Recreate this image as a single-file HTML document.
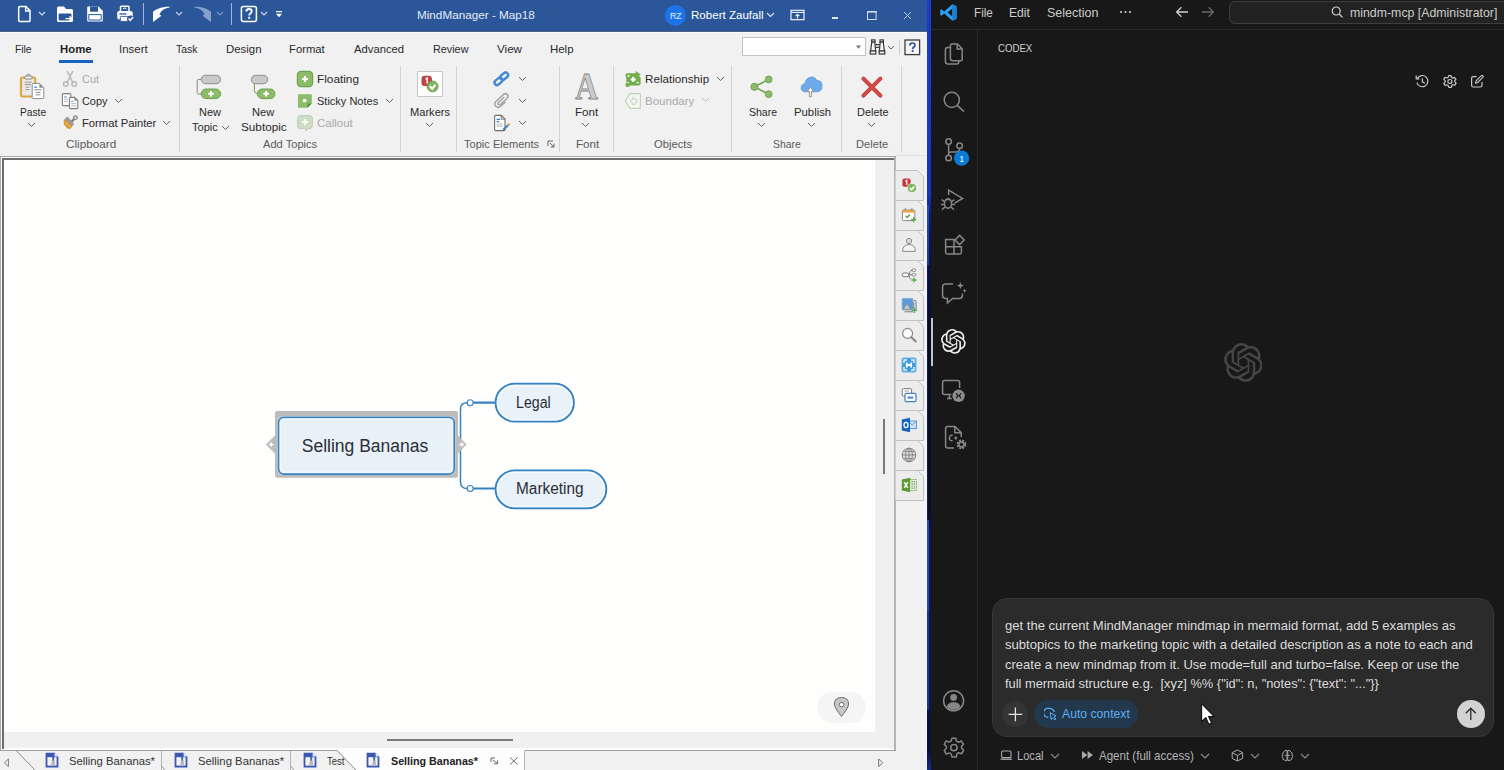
<!DOCTYPE html>
<html><head><meta charset="utf-8"><title>MindManager - VS Code</title>
<style>
html,body{margin:0;padding:0;}
body{width:1504px;height:770px;overflow:hidden;position:relative;background:#181818;font-family:"Liberation Sans",sans-serif;}
body>div,body>span,body>svg{position:absolute;display:block;}
body>span{white-space:pre;transform-origin:0 0;}
</style></head><body>
<div style="left:0px;top:0px;width:927px;height:770px;background:#f1f1f2;"></div>
<div style="left:0px;top:0px;width:927px;height:31px;background:#2b579a;"></div>
<div style="left:0px;top:31px;width:927px;height:1px;background:#4d6186;"></div>
<div style="left:0px;top:32px;width:927px;height:1px;background:#fbfbfb;"></div>
<div style="left:0px;top:156px;width:896px;height:1px;background:#a9a9a9;"></div>
<div style="left:0px;top:157px;width:1px;height:594px;background:#a9a9a9;"></div>
<div style="left:1px;top:157px;width:894px;height:593px;background:#fdfdfd;"></div>
<div style="left:2px;top:158px;width:892px;height:2px;background:#6d6d6d;"></div>
<div style="left:2px;top:158px;width:2px;height:591px;background:#6d6d6d;"></div>
<div style="left:4px;top:160px;width:871px;height:572px;background:#fefefd;"></div>
<div style="left:4px;top:732px;width:890px;height:16px;background:#f0f0f0;"></div>
<div style="left:875px;top:160px;width:19px;height:572px;background:#f0f0f0;"></div>
<div style="left:894px;top:157px;width:2px;height:594px;background:#b4b4b4;"></div>
<div style="left:0px;top:750px;width:896px;height:1px;background:#a0a0a0;"></div>
<div style="left:896px;top:155px;width:29px;height:1px;background:#dedede;"></div>
<div style="left:883px;top:419px;width:2px;height:55px;background:#7a7a7a;"></div>
<div style="left:387px;top:739px;width:126px;height:2px;background:#7a7a7a;"></div>
<div style="left:927px;top:0px;width:4px;height:770px;background:linear-gradient(to bottom,#1a3cc6 0px,#1535c0 195px,#0d1c66 215px,#0a1240 265px,#080c2c 330px,#080c2c 515px,#0c1648 530px,#0c1648 700px,#0a1038 720px,#0a1038 750px,#142c90 770px);"></div>
<div style="left:927px;top:205px;width:2px;height:60px;background:linear-gradient(to bottom,#1c49d0,#1a3aa0);"></div>
<div style="left:927px;top:265px;width:1px;height:255px;background:#101c58;"></div>
<div style="left:927px;top:520px;width:2px;height:90px;background:#1d48c4;"></div>
<div style="left:927px;top:610px;width:2px;height:100px;background:#16389c;"></div>
<div style="left:925px;top:32px;width:2px;height:738px;background:#f3f3f3;"></div>
<div style="left:931px;top:0px;width:573px;height:770px;background:#181818;"></div>
<div style="left:931px;top:29px;width:573px;height:1px;background:#2b2b2b;"></div>
<div style="left:977px;top:30px;width:1px;height:740px;background:#2b2b2b;"></div>
<svg style="left:17px;top:5px;" width="15" height="18" viewBox="0 0 15 18"><path d="M1.7 2.6 Q1.7 1.6 2.7 1.6 H9 L13 5.6 V15.4 Q13 16.4 12 16.4 H2.7 Q1.7 16.4 1.7 15.4 Z" fill="none" stroke="#ffffff" stroke-width="1.5"/><path d="M8.6 1.6 V6 H13" fill="none" stroke="#ffffff" stroke-width="1.3"/></svg>
<svg style="left:38.0px;top:11.1px;" width="8" height="5" viewBox="0 0 8 5"><path d="M1 1 L4.0 4 L7 1" fill="none" stroke="#d5def0" stroke-width="1.1"/></svg>
<svg style="left:56px;top:5px;" width="18" height="18" viewBox="0 0 18 18"><path d="M1 3 Q1 1.5 2.5 1.5 H8 L10 4 H15.5 Q17 4 17 5.5 V15.5 Q17 17 15.5 17 H2.5 Q1 17 1 15.5 Z" fill="#ffffff"/><rect x="2.6" y="8.6" width="12.8" height="6.8" rx="1" fill="#2b579a"/><path d="M9.5 13.6 H15.6 M13.4 11.4 L15.8 13.6 L13.4 15.8" stroke="#ffffff" stroke-width="1.4" fill="none"/></svg>
<svg style="left:86px;top:5px;" width="18" height="18" viewBox="0 0 18 18"><path d="M1.2 2.5 Q1.2 1.5 2.2 1.5 H12.5 L16.8 5.8 V15.5 Q16.8 16.5 15.8 16.5 H2.2 Q1.2 16.5 1.2 15.5 Z" fill="#ffffff"/><rect x="4" y="1.5" width="8" height="5.2" fill="#2b579a"/><rect x="3.4" y="10" width="11.2" height="5" fill="#2b579a" opacity="0"/><path d="M2.8 9.6 H15.2 V15 H2.8 Z" fill="#ffffff" stroke="#2b579a" stroke-width="1"/></svg>
<svg style="left:116px;top:5px;" width="19" height="18" viewBox="0 0 19 18"><path d="M4.5 6 V2 Q4.5 1.2 5.3 1.2 H12.2 Q13 1.2 13 2 V6" fill="none" stroke="#ffffff" stroke-width="1.5"/><rect x="1.2" y="6" width="15.6" height="8.4" rx="2.2" fill="#ffffff"/><rect x="4.3" y="11.4" width="8.4" height="5" rx="0.8" fill="#ffffff" stroke="#2b579a" stroke-width="0.9"/><rect x="3.4" y="8.3" width="7" height="1.3" fill="#2b579a"/><path d="M7 3.8 L9 2.8 L10.6 4.2" fill="none" stroke="#ffffff" stroke-width="1"/><circle cx="14.6" cy="14" r="3.6" fill="#2b579a"/><path d="M12.6 13.6 L14.2 15.4 L17.2 12" fill="none" stroke="#ffffff" stroke-width="1.5"/></svg>
<div style="left:143px;top:3px;width:1px;height:22px;background:#9db4dc;"></div>
<svg style="left:151px;top:5px;" width="20" height="19" viewBox="0 0 20 19"><path d="M18.6 1.7 C11.6 1.4 5.6 3.6 2 6.8 V17 L10.4 10.8 L8.4 9.2 C10.4 5.4 14 3 18.6 2.5 Z" fill="#ffffff"/></svg>
<svg style="left:175.0px;top:10.7px;" width="8" height="5" viewBox="0 0 8 5"><path d="M1 1 L4.0 4 L7 1" fill="none" stroke="#c5d2ea" stroke-width="1.1"/></svg>
<svg style="left:193px;top:5px;" width="20" height="19" viewBox="0 0 20 19"><path d="M1.4 1.7 C8.4 1.4 14.4 3.6 18 6.8 V17 L9.6 10.8 L11.6 9.2 C9.6 5.4 6 3 1.4 2.5 Z" fill="#86a0cc"/></svg>
<svg style="left:216.0px;top:10.7px;" width="8" height="5" viewBox="0 0 8 5"><path d="M1 1 L4.0 4 L7 1" fill="none" stroke="#7f9acb" stroke-width="1.1"/></svg>
<div style="left:231px;top:3px;width:1px;height:22px;background:#9db4dc;"></div>
<svg style="left:240px;top:5px;" width="18" height="18" viewBox="0 0 18 18"><rect x="1.4" y="1.4" width="15" height="15" rx="1.8" fill="none" stroke="#ffffff" stroke-width="1.5"/><path d="M6.3 6.6 Q6.3 4 9 4 Q11.7 4 11.7 6.3 Q11.7 7.8 10.3 8.5 Q9.2 9.1 9.2 10.6" fill="none" stroke="#ffffff" stroke-width="1.9"/><rect x="8.2" y="11.8" width="2" height="2" fill="#ffffff"/></svg>
<svg style="left:260.0px;top:10.7px;" width="8" height="5" viewBox="0 0 8 5"><path d="M1 1 L4.0 4 L7 1" fill="none" stroke="#d5def0" stroke-width="1.1"/></svg>
<svg style="left:275px;top:10px;" width="8" height="9" viewBox="0 0 8 9"><rect x="1" y="1" width="6" height="1.2" fill="#ffffff"/><path d="M1 3.8 H7 L4 7.2 Z" fill="#ffffff"/></svg>
<span style="left:416.60px;top:8.00px;font-size:11.3px;line-height:15px;color:#e4eaf6;transform:scaleX(1.0369);">MindManager - Map18</span>
<svg style="left:664px;top:4px;" width="23" height="23" viewBox="0 0 23 23"><circle cx="11.3" cy="11.4" r="10.5" fill="#1b74e8"/></svg>
<span style="left:670.00px;top:10.00px;font-size:9.5px;line-height:12px;color:#e8f0ff;transform:scaleX(0.9109);">RZ</span>
<span style="left:691.30px;top:8.00px;font-size:11.3px;line-height:15px;color:#ffffff;transform:scaleX(1.0237);">Robert Zaufall</span>
<svg style="left:766.1px;top:11.75px;" width="9" height="5.5" viewBox="0 0 9 5.5"><path d="M1 1 L4.5 4.5 L8 1" fill="none" stroke="#e0e8f6" stroke-width="1.1"/></svg>
<svg style="left:790px;top:9px;" width="15" height="12" viewBox="0 0 15 12"><rect x="1" y="1.3" width="13" height="9.4" fill="none" stroke="#ffffff" stroke-width="1.1"/><path d="M1 3.4 H14" stroke="#ffffff" stroke-width="1"/><path d="M7.5 9.6 V5.6 M5.6 7.2 L7.5 5.4 L9.4 7.2" fill="none" stroke="#ffffff" stroke-width="1.1"/></svg>
<div style="left:832px;top:17px;width:6px;height:2px;background:#dfe7f5;"></div>
<svg style="left:866px;top:10px;" width="12" height="11" viewBox="0 0 12 11"><rect x="1.5" y="1.5" width="8.6" height="8" fill="none" stroke="#d4deef" stroke-width="1"/><rect x="1" y="1" width="9.6" height="1.6" fill="#d4deef"/></svg>
<svg style="left:903px;top:11px;" width="9" height="9" viewBox="0 0 9 9"><path d="M1 1 L8 8 M8 1 L1 8" stroke="#c0cde6" stroke-width="1"/></svg>
<span style="left:14.50px;top:42.00px;font-size:11.3px;line-height:15px;color:#2a2a2a;transform:scaleX(0.9103);">File</span>
<span style="left:60.00px;top:42.00px;font-size:11.3px;line-height:15px;color:#1f1f1f;font-weight:bold;transform:scaleX(1.0048);">Home</span>
<div style="left:59px;top:60px;width:34px;height:3px;background:#1565c0;"></div>
<span style="left:118.90px;top:42.00px;font-size:11.3px;line-height:15px;color:#2a2a2a;transform:scaleX(1.0169);">Insert</span>
<span style="left:175.60px;top:42.00px;font-size:11.3px;line-height:15px;color:#2a2a2a;transform:scaleX(0.9204);">Task</span>
<span style="left:225.60px;top:42.00px;font-size:11.3px;line-height:15px;color:#2a2a2a;transform:scaleX(1.0114);">Design</span>
<span style="left:289.40px;top:42.00px;font-size:11.3px;line-height:15px;color:#2a2a2a;transform:scaleX(0.9993);">Format</span>
<span style="left:354.00px;top:42.00px;font-size:11.3px;line-height:15px;color:#2a2a2a;transform:scaleX(0.9960);">Advanced</span>
<span style="left:433.40px;top:42.00px;font-size:11.3px;line-height:15px;color:#2a2a2a;transform:scaleX(0.9568);">Review</span>
<span style="left:496.90px;top:42.00px;font-size:11.3px;line-height:15px;color:#2a2a2a;transform:scaleX(1.0309);">View</span>
<span style="left:550.00px;top:42.00px;font-size:11.3px;line-height:15px;color:#2a2a2a;transform:scaleX(1.0119);">Help</span>
<div style="left:742px;top:37px;width:124px;height:19px;background:#ffffff;border:1px solid #c2c2c2;box-sizing:border-box;"></div>
<svg style="left:855px;top:45px;" width="7" height="5" viewBox="0 0 7 5"><path d="M1 0.6 H6 L3.5 3.8 Z" fill="#6c7684"/></svg>
<svg style="left:869px;top:39px;" width="17" height="16" viewBox="0 0 17 16"><g fill="#f6f6f6" stroke="#3a3a3a" stroke-width="1.2"><rect x="2.6" y="0.9" width="3.4" height="2.2"/><rect x="11" y="0.9" width="3.4" height="2.2"/><path d="M2.8 3.1 H5.8 L6.6 12 H1.6 Z"/><path d="M11.2 3.1 H14.2 L15.4 12 H10.4 Z"/><rect x="1.2" y="12" width="5.6" height="3"/><rect x="10.2" y="12" width="5.6" height="3"/><path d="M6.2 5.6 H10.8 M6.4 8.4 H10.6" fill="none"/></g></svg>
<svg style="left:887.0px;top:44.5px;" width="8" height="5" viewBox="0 0 8 5"><path d="M1 1 L4.0 4 L7 1" fill="none" stroke="#606060" stroke-width="1"/></svg>
<div style="left:899px;top:40px;width:1px;height:15px;background:#d0d0d0;"></div>
<svg style="left:904px;top:39px;" width="17" height="17" viewBox="0 0 17 17"><rect x="1" y="1" width="14.6" height="14.6" fill="#f6f6f6" stroke="#3c3c3c" stroke-width="1.3"/><path d="M5.9 6.5 Q5.9 4 8.4 4 Q10.9 4 10.9 6.2 Q10.9 7.6 9.6 8.3 Q8.6 8.9 8.6 10.2" fill="none" stroke="#2b4f8f" stroke-width="1.7"/><rect x="7.7" y="11.2" width="1.8" height="1.8" fill="#2b4f8f"/></svg>
<div style="left:179px;top:66px;width:1px;height:86px;background:#d4d4d4;"></div>
<div style="left:400px;top:66px;width:1px;height:86px;background:#d4d4d4;"></div>
<div style="left:456px;top:66px;width:1px;height:86px;background:#d4d4d4;"></div>
<div style="left:559px;top:66px;width:1px;height:86px;background:#d4d4d4;"></div>
<div style="left:613px;top:66px;width:1px;height:86px;background:#d4d4d4;"></div>
<div style="left:731px;top:66px;width:1px;height:86px;background:#d4d4d4;"></div>
<div style="left:841px;top:66px;width:1px;height:86px;background:#d4d4d4;"></div>
<div style="left:901px;top:66px;width:1px;height:86px;background:#d4d4d4;"></div>
<span style="left:65.60px;top:137.00px;font-size:11.3px;line-height:15px;color:#5a5a5a;transform:scaleX(1.0390);">Clipboard</span>
<span style="left:262.50px;top:137.00px;font-size:11.3px;line-height:15px;color:#5a5a5a;transform:scaleX(0.9841);">Add Topics</span>
<span style="left:463.80px;top:137.00px;font-size:11.3px;line-height:15px;color:#5a5a5a;transform:scaleX(0.9797);">Topic Elements</span>
<svg style="left:547px;top:140px;" width="8" height="8" viewBox="0 0 8 8"><path d="M1 6 V1 H6" fill="none" stroke="#666" stroke-width="1"/><path d="M3 3 L7 7 M7 3.6 V7 H3.6" fill="none" stroke="#666" stroke-width="1"/></svg>
<span style="left:575.50px;top:137.00px;font-size:11.3px;line-height:15px;color:#5a5a5a;transform:scaleX(1.0311);">Font</span>
<span style="left:653.60px;top:137.00px;font-size:11.3px;line-height:15px;color:#5a5a5a;transform:scaleX(0.9941);">Objects</span>
<span style="left:772.80px;top:137.00px;font-size:11.3px;line-height:15px;color:#5a5a5a;transform:scaleX(0.9200);">Share</span>
<span style="left:855.70px;top:137.00px;font-size:11.3px;line-height:15px;color:#5a5a5a;transform:scaleX(0.9846);">Delete</span>
<span style="left:19.50px;top:105.00px;font-size:11.3px;line-height:15px;color:#2a2a2a;transform:scaleX(0.9043);">Paste</span>
<svg style="left:26.5px;top:121.65px;" width="9" height="5.5" viewBox="0 0 9 5.5"><path d="M1 1 L4.5 4.5 L8 1" fill="none" stroke="#606060" stroke-width="1.0"/></svg>
<span style="left:81.80px;top:72.00px;font-size:11.3px;line-height:15px;color:#a9a9a9;transform:scaleX(0.9657);">Cut</span>
<span style="left:81.80px;top:94.00px;font-size:11.3px;line-height:15px;color:#2a2a2a;transform:scaleX(0.9638);">Copy</span>
<svg style="left:113.7px;top:98.05px;" width="9" height="5.5" viewBox="0 0 9 5.5"><path d="M1 1 L4.5 4.5 L8 1" fill="none" stroke="#606060" stroke-width="1.0"/></svg>
<span style="left:81.80px;top:116.00px;font-size:11.3px;line-height:15px;color:#2a2a2a;transform:scaleX(0.9950);">Format Painter</span>
<svg style="left:162.4px;top:120.05px;" width="9" height="5.5" viewBox="0 0 9 5.5"><path d="M1 1 L4.5 4.5 L8 1" fill="none" stroke="#606060" stroke-width="1.0"/></svg>
<span style="left:198.70px;top:105.00px;font-size:11.3px;line-height:15px;color:#2a2a2a;transform:scaleX(0.9724);">New</span>
<span style="left:192.30px;top:120.00px;font-size:11.3px;line-height:15px;color:#2a2a2a;transform:scaleX(0.9752);">Topic</span>
<svg style="left:220.5px;top:125.25px;" width="9" height="5.5" viewBox="0 0 9 5.5"><path d="M1 1 L4.5 4.5 L8 1" fill="none" stroke="#606060" stroke-width="1.0"/></svg>
<span style="left:251.70px;top:105.00px;font-size:11.3px;line-height:15px;color:#2a2a2a;transform:scaleX(0.9856);">New</span>
<span style="left:240.70px;top:120.00px;font-size:11.3px;line-height:15px;color:#2a2a2a;transform:scaleX(1.0400);">Subtopic</span>
<span style="left:316.50px;top:72.00px;font-size:11.3px;line-height:15px;color:#2a2a2a;transform:scaleX(1.0450);">Floating</span>
<span style="left:316.50px;top:94.00px;font-size:11.3px;line-height:15px;color:#2a2a2a;transform:scaleX(0.9744);">Sticky Notes</span>
<svg style="left:384.5px;top:98.25px;" width="9" height="5.5" viewBox="0 0 9 5.5"><path d="M1 1 L4.5 4.5 L8 1" fill="none" stroke="#606060" stroke-width="1.0"/></svg>
<span style="left:316.80px;top:116.00px;font-size:11.3px;line-height:15px;color:#a9a9a9;transform:scaleX(1.0171);">Callout</span>
<span style="left:409.60px;top:105.00px;font-size:11.3px;line-height:15px;color:#2a2a2a;transform:scaleX(0.9822);">Markers</span>
<svg style="left:424.5px;top:121.85px;" width="9" height="5.5" viewBox="0 0 9 5.5"><path d="M1 1 L4.5 4.5 L8 1" fill="none" stroke="#606060" stroke-width="1.0"/></svg>
<svg style="left:517.5px;top:76.05px;" width="9" height="5.5" viewBox="0 0 9 5.5"><path d="M1 1 L4.5 4.5 L8 1" fill="none" stroke="#606060" stroke-width="1.0"/></svg>
<svg style="left:517.5px;top:97.95px;" width="9" height="5.5" viewBox="0 0 9 5.5"><path d="M1 1 L4.5 4.5 L8 1" fill="none" stroke="#606060" stroke-width="1.0"/></svg>
<svg style="left:517.5px;top:119.95px;" width="9" height="5.5" viewBox="0 0 9 5.5"><path d="M1 1 L4.5 4.5 L8 1" fill="none" stroke="#606060" stroke-width="1.0"/></svg>
<span style="left:574.70px;top:105.00px;font-size:11.3px;line-height:15px;color:#2a2a2a;transform:scaleX(1.0311);">Font</span>
<svg style="left:580.5px;top:121.85px;" width="9" height="5.5" viewBox="0 0 9 5.5"><path d="M1 1 L4.5 4.5 L8 1" fill="none" stroke="#606060" stroke-width="1.0"/></svg>
<span style="left:644.50px;top:72.00px;font-size:11.3px;line-height:15px;color:#2a2a2a;transform:scaleX(1.0311);">Relationship</span>
<svg style="left:715.5px;top:76.05px;" width="9" height="5.5" viewBox="0 0 9 5.5"><path d="M1 1 L4.5 4.5 L8 1" fill="none" stroke="#606060" stroke-width="1.0"/></svg>
<span style="left:644.50px;top:94.00px;font-size:11.3px;line-height:15px;color:#a9a9a9;transform:scaleX(1.0203);">Boundary</span>
<svg style="left:700.5px;top:97.25px;" width="9" height="5.5" viewBox="0 0 9 5.5"><path d="M1 1 L4.5 4.5 L8 1" fill="none" stroke="#bdbdbd" stroke-width="1.0"/></svg>
<span style="left:748.70px;top:105.00px;font-size:11.3px;line-height:15px;color:#2a2a2a;transform:scaleX(0.9300);">Share</span>
<svg style="left:756.5px;top:121.65px;" width="9" height="5.5" viewBox="0 0 9 5.5"><path d="M1 1 L4.5 4.5 L8 1" fill="none" stroke="#606060" stroke-width="1.0"/></svg>
<span style="left:793.60px;top:105.00px;font-size:11.3px;line-height:15px;color:#2a2a2a;transform:scaleX(1.0034);">Publish</span>
<svg style="left:806.5px;top:121.65px;" width="9" height="5.5" viewBox="0 0 9 5.5"><path d="M1 1 L4.5 4.5 L8 1" fill="none" stroke="#606060" stroke-width="1.0"/></svg>
<span style="left:856.80px;top:105.00px;font-size:11.3px;line-height:15px;color:#2a2a2a;transform:scaleX(0.9692);">Delete</span>
<svg style="left:866.8px;top:121.65px;" width="9" height="5.5" viewBox="0 0 9 5.5"><path d="M1 1 L4.5 4.5 L8 1" fill="none" stroke="#606060" stroke-width="1.0"/></svg>
<svg style="left:19px;top:73px;" width="27" height="27" viewBox="0 0 27 27"><rect x="1.9" y="4.4" width="14.4" height="19" rx="1.6" fill="#e9e9e9" stroke="#d9a53c" stroke-width="2"/>
<path d="M3.6 6 V21.8" stroke="#f0d08a" stroke-width="0.8" stroke-dasharray="1 1"/>
<rect x="7.6" y="1.3" width="3.6" height="3" rx="1.4" fill="#f4f4f4" stroke="#8a8a8a" stroke-width="1"/><rect x="5.8" y="3" width="7.2" height="3" rx="1" fill="#f4f4f4" stroke="#8a8a8a" stroke-width="1"/>
<path d="M5.6 9.2 H12.6 M5.6 11.6 H12 M6.6 14.2 H10.6 M6.6 16.6 H10.6" stroke="#9a9a9a" stroke-width="1"/>
<path d="M13.2 11.4 Q13.2 10.4 14.2 10.4 H20.6 L24.8 14.6 V24.6 Q24.8 25.6 23.8 25.6 H14.2 Q13.2 25.6 13.2 24.6 Z" fill="#fdfdfd" stroke="#8c8c8c" stroke-width="1"/>
<path d="M20.4 10.6 V14.8 H24.6 Z" fill="#8f8f8f"/>
<path d="M15.2 14.2 H18.2" stroke="#2f7fd0" stroke-width="1.1"/>
<path d="M15.2 16.8 H22.6 M16.6 19.4 H21.4 M16.6 21.8 H21.4" stroke="#8a8a8a" stroke-width="1"/></svg>
<svg style="left:62px;top:70px;" width="16" height="18" viewBox="0 0 16 18"><g fill="none" stroke="#b9b9b9" stroke-width="1.5"><path d="M5.2 1.2 L10.6 12.2 M10.8 1.2 L5.4 12.2"/><circle cx="3.8" cy="14" r="2.3"/><circle cx="12.2" cy="14" r="2.3"/></g></svg>
<svg style="left:61px;top:92px;" width="18" height="18" viewBox="0 0 18 18"><rect x="1.4" y="1.6" width="8.4" height="12" rx="1.2" fill="#fdfdfd" stroke="#7d7d7d" stroke-width="1.1"/>
<path d="M3 5 H5.6" stroke="#5b8fc9" stroke-width="1"/><path d="M3 7.2 H7 M3 9.4 H7" stroke="#b0b0b0" stroke-width="0.9"/>
<path d="M8.4 6.4 Q8.4 5.4 9.4 5.4 H13.6 L16.8 8.6 V15.6 Q16.8 16.6 15.8 16.6 H9.4 Q8.4 16.6 8.4 15.6 Z" fill="#fdfdfd" stroke="#7d7d7d" stroke-width="1.1"/>
<path d="M13.4 5.6 V8.8 H16.6 Z" fill="#8a8a8a"/>
<path d="M10.2 9.4 H12.2" stroke="#5b8fc9" stroke-width="1"/><path d="M10.2 11.6 H15 M10.2 13.8 H15" stroke="#b0b0b0" stroke-width="0.9"/></svg>
<svg style="left:62px;top:114px;" width="17" height="17" viewBox="0 0 17 17"><circle cx="13.4" cy="3.6" r="1.9" fill="#d8d8d8" stroke="#7f7f7f" stroke-width="1.1"/>
<path d="M12.2 5 L8.6 8.6" stroke="#7f7f7f" stroke-width="2.4"/>
<path d="M2.2 5.6 L5.4 2.6 L12.4 10 L9.2 13 Z" fill="#9b9b9b"/>
<path d="M1.4 7 L3.2 5.2 L10.4 12.4 L7.4 15.6 L6 14 L5 15 L3.6 11.6 L2.6 12 Z" fill="#d79a2a"/>
<path d="M3.6 8.2 L8.6 13.4" stroke="#f3cf7a" stroke-width="1"/></svg>
<svg style="left:195px;top:73px;" width="28" height="28" viewBox="0 0 28 28"><path d="M6.4 6.4 H3.6 Q2.2 6.4 2.2 7.8 V19.6 Q2.2 21 3.6 21 H6.4" fill="none" stroke="#858585" stroke-width="1"/>
<rect x="6.2" y="2.3" width="19.4" height="8.4" rx="4.2" fill="#c9c9c9" stroke="#8e8e8e" stroke-width="1"/>
<rect x="6.2" y="16" width="19.4" height="9.6" rx="4.8" fill="#8cbb69" stroke="#6ea24d" stroke-width="1"/><path d="M13.2 20.8 H18.8 M16 18.0 V23.6" stroke="#fff" stroke-width="2" fill="none"/></svg>
<svg style="left:249px;top:73px;" width="28" height="28" viewBox="0 0 28 28"><path d="M5.4 10.6 V17.6 Q5.4 20.4 8.4 20.4" fill="none" stroke="#6ea24d" stroke-width="1"/>
<rect x="2.3" y="2.3" width="16.4" height="8.4" rx="4.2" fill="#c9c9c9" stroke="#8e8e8e" stroke-width="1"/>
<rect x="8.4" y="16" width="17.6" height="9.6" rx="4.8" fill="#8cbb69" stroke="#6ea24d" stroke-width="1"/><path d="M14.399999999999999 20.8 H20.0 M17.2 18.0 V23.6" stroke="#fff" stroke-width="2" fill="none"/></svg>
<svg style="left:296px;top:70px;" width="18" height="18" viewBox="0 0 18 18"><rect x="1.4" y="1.4" width="15.2" height="15.2" rx="3.6" fill="#8cbb69" stroke="#6ea24d" stroke-width="1.2"/><path d="M6 9 H12 M9 6 V12" stroke="#fff" stroke-width="2.1" fill="none"/></svg>
<svg style="left:297px;top:93px;" width="16" height="16" viewBox="0 0 16 16"><path d="M1 1.2 H14.8 V10.4 L10.4 14.8 H1 Z" fill="#8cbb69"/><path d="M14.8 10.4 H10.4 V14.8 Z" fill="#5c9440"/><circle cx="7.6" cy="7.6" r="1.9" fill="#fff"/></svg>
<svg style="left:296px;top:114px;" width="18" height="18" viewBox="0 0 18 18"><path d="M4.4 1.6 H13.4 Q16.4 1.6 16.4 4.6 V11.6 Q16.4 14.6 13.4 14.6 H11.6 L10.2 16.8 L9 14.6 H4.4 Q1.6 14.6 1.6 11.6 V4.6 Q1.6 1.6 4.4 1.6 Z" fill="#cfdcc6" stroke="#bccdb2" stroke-width="1"/><path d="M6 8 H12 M9 5 V11" stroke="#f6f8f4" stroke-width="2" fill="none"/></svg>
<div style="left:417px;top:71px;width:26px;height:26px;background:#ffffff;border:1px solid #c8c8c8;box-sizing:border-box;"></div>
<svg style="left:420px;top:74px;" width="20" height="20" viewBox="0 0 20 20"><rect x="2" y="2.2" width="9.4" height="9.4" rx="2.2" fill="#c8444a" stroke="#a5343a" stroke-width="0.9"/><path d="M5.6 5.4 L7.2 4.2 V9.6" fill="none" stroke="#fff" stroke-width="1.5"/><circle cx="12.6" cy="12.4" r="5.4" fill="#7fb55c" stroke="#639a47" stroke-width="0.9"/><path d="M9.8 12 L12.2 14.8 L15.4 10.6" fill="none" stroke="#fff" stroke-width="2"/></svg>
<svg style="left:492px;top:70px;" width="19" height="18" viewBox="0 0 19 18"><g fill="none" stroke="#4489d2" stroke-width="2.4"><rect x="-4.3" y="-2.5" width="8.6" height="5" rx="2.5" transform="translate(6.4 11.4) rotate(-40)"/><rect x="-4.3" y="-2.5" width="8.6" height="5" rx="2.5" transform="translate(12.2 6.2) rotate(-40)"/></g></svg>
<svg style="left:493px;top:92px;" width="17" height="17" viewBox="0 0 17 17"><path d="M11.2 5.2 L5.6 10.4 Q4.4 11.6 5.4 12.6 Q6.4 13.4 7.6 12.4 L14 6.4 Q16 4.2 14.2 2.4 Q12.2 0.8 10 2.8 L3 9.4 Q0.6 12 2.8 14.4 Q5.2 16.4 7.8 14.2 L12.6 9.8" fill="none" stroke="#8a8a8a" stroke-width="1.1"/></svg>
<svg style="left:493px;top:114px;" width="18" height="18" viewBox="0 0 18 18"><path d="M1.6 2.4 Q1.6 1.4 2.6 1.4 H8.4 L12 5 V15.6 Q12 16.6 11 16.6 H2.6 Q1.6 16.6 1.6 15.6 Z" fill="#fdfdfd" stroke="#6f6f6f" stroke-width="1.1"/><path d="M8.2 1.6 V5.2 H11.8" fill="none" stroke="#6f6f6f" stroke-width="1"/>
<path d="M3.6 5.4 H7 M3.6 7.6 H6" stroke="#2f7fd0" stroke-width="1.1"/><path d="M3.6 10 H9.6 M3.6 12.2 H9.6" stroke="#b5b5b5" stroke-width="1"/>
<path d="M10.4 15.8 L15.2 11" stroke="#3d7fc8" stroke-width="2"/><path d="M15 11.2 L16.4 9.8" stroke="#e39a2a" stroke-width="2"/><path d="M9.6 16.8 L10 15.2 L11.2 16.4 Z" fill="#555"/></svg>
<svg style="left:570px;top:68px" width="34" height="36" viewBox="0 0 34 36"><text x="16.6" y="30.9" text-anchor="middle" font-family="Liberation Serif, serif" font-size="37.5" font-weight="bold" fill="#cbcbcb" stroke="#858585" stroke-width="0.8" transform="translate(16.6 0) scale(0.84 1) translate(-16.6 0)">A</text></svg>
<svg style="left:624px;top:70px;" width="18" height="18" viewBox="0 0 18 18"><path d="M1.4 5.2 Q1.4 3.2 3.4 3.2 H11.6 V1 L16.8 4.6 L11.6 8 V6 H14.4 Q16.6 6 16.6 8 V13.6 Q16.6 15.4 14.6 15.4 H5.6 Q5.4 17 3.6 17 Q1.4 17 1.4 14.8 Q1.4 13.6 2.4 13 V9 Z" fill="#6fae4b"/>
<path d="M6.6 9.4 H11.8 M9.2 6.8 V12" stroke="#fff" stroke-width="2"/><path d="M3.4 6 H5.6 M12.6 12.6 H14.6 M3.6 12.6 H5" stroke="#fff" stroke-width="1.3"/></svg>
<svg style="left:624px;top:92px;" width="18" height="18" viewBox="0 0 18 18"><path d="M6 1.6 H15.4 Q16.4 1.6 16.4 2.6 V15.4 Q16.4 16.4 15.4 16.4 H6 L1.4 9 Z" fill="#f4f6f2" stroke="#bfd3b3" stroke-width="1.1"/><path d="M8.6 6 H11 V8 H13 V10.4 H11 V12.4 H8.6 V10.4 H6.6 V8 H8.6 Z" fill="#fff" stroke="#bfd3b3" stroke-width="1"/></svg>
<svg style="left:749px;top:74px;" width="26" height="26" viewBox="0 0 26 26"><path d="M19.6 5.4 L5.4 12.8 L19.6 20.2" fill="none" stroke="#6ea24d" stroke-width="1.6"/><circle cx="19.7" cy="5.4" r="3.4" fill="#8cbb69" stroke="#6ea24d" stroke-width="0.9"/><circle cx="5.4" cy="12.8" r="3.6" fill="#8cbb69" stroke="#6ea24d" stroke-width="0.9"/><circle cx="19.7" cy="20.2" r="3.4" fill="#8cbb69" stroke="#6ea24d" stroke-width="0.9"/></svg>
<svg style="left:799px;top:74px;" width="26" height="26" viewBox="0 0 26 26"><path d="M6.6 17.8 Q2.2 17.8 2.2 13.8 Q2.2 10.2 6 9.8 Q6.4 5.2 10.4 3.6 Q15.4 1.6 18 6.6 Q22.8 6.2 23 11.4 Q23.2 17.8 17.6 17.8 Z" fill="#6eaae8" stroke="#4d8bd0" stroke-width="0.9" stroke-dasharray="2 0.6"/>
<path d="M10.4 22.8 V17.4 H8.2 L11.4 13.2 L14.6 17.4 H12.4 V22.8 Z" fill="#fff" stroke="#8a8a8a" stroke-width="0.9"/></svg>
<svg style="left:860px;top:75px;" width="24" height="24" viewBox="0 0 24 24"><path d="M3.4 3.6 L20.4 20.6 M20.4 3.6 L3.4 20.6" stroke="#b8383a" stroke-width="4" stroke-linecap="round"/><path d="M3.4 3.6 L20.4 20.6 M20.4 3.6 L3.4 20.6" stroke="#d54a48" stroke-width="2.8" stroke-linecap="round"/></svg>
<svg style="left:260px;top:375px;" width="360" height="145" viewBox="0 0 360 145"><path d="M473 402.7 H467 Q460.5 402.7 460.5 409 V482 Q460.5 488.5 467 488.5 H473" transform="translate(-260 -375)" fill="none" stroke="#3583c2" stroke-width="1.5"/><path d="M473 402.7 H496 M473 488.5 H496" transform="translate(-260 -375)" fill="none" stroke="#3583c2" stroke-width="2.2"/><circle cx="210.2" cy="27.69999999999999" r="3" fill="#fff" stroke="#3583c2" stroke-width="1.1"/><circle cx="210.2" cy="113.5" r="3" fill="#fff" stroke="#3583c2" stroke-width="1.1"/><path d="M277 411 H456 Q458 411 458 413 V435.4 L466.6 444.5 L458 453.6 V475.6 Q458 477.7 456 477.7 H277 Q275 477.7 275 475.6 V453.6 L265.8 444.5 L275 435.4 V413 Q275 411 277 411 Z" transform="translate(-260 -375)" fill="#bcbcbc"/><rect x="17.600000000000023" y="41.19999999999999" width="177.6" height="58.9" rx="5.5" fill="#f4f8fc"/><rect x="18.600000000000023" y="42.30000000000001" width="175.6" height="56.8" rx="5" fill="#e8f0f8" stroke="#3583c2" stroke-width="1.7"/><rect x="20.399999999999977" y="44.10000000000002" width="172" height="53.2" rx="3.6" fill="none" stroke="#f5f9fd" stroke-width="1.4"/><path d="M8.899999999999977 69.5 H13.5 M11.199999999999989 67.19999999999999 V71.80000000000001" stroke="#fff" stroke-width="1.3"/><path d="M199.5 69.5 H204.10000000000002 M201.8 67.19999999999999 V71.80000000000001" stroke="#fff" stroke-width="1.3"/><rect x="235.6" y="8.7" width="78.2" height="37.9" rx="19.0" fill="#e9f1f9" stroke="#3583c2" stroke-width="2"/><rect x="237.4" y="10.5" width="74.6" height="34.3" rx="17.2" fill="none" stroke="#f6fafd" stroke-width="1.4"/><rect x="235.6" y="95.4" width="110.7" height="37.9" rx="19.0" fill="#e9f1f9" stroke="#3583c2" stroke-width="2"/><rect x="237.4" y="97.2" width="107.1" height="34.3" rx="17.2" fill="none" stroke="#f6fafd" stroke-width="1.4"/></svg>
<span style="left:301.80px;top:435.00px;font-size:17.5px;line-height:23px;color:#2a2e36;transform:scaleX(1.0000);">Selling Bananas</span>
<span style="left:516.40px;top:392.00px;font-size:15.8px;line-height:21px;color:#2a2e36;transform:scaleX(0.8987);">Legal</span>
<span style="left:516.40px;top:478.00px;font-size:15.8px;line-height:21px;color:#2a2e36;transform:scaleX(0.9750);">Marketing</span>
<div style="left:817px;top:692px;width:49px;height:31px;background:#f5f5f5;border-radius:15.5px;"></div>
<svg style="left:833px;top:696px;" width="17" height="22" viewBox="0 0 17 22"><path d="M8.5 20.4 Q1.4 11.8 1.4 8 Q1.4 1.5 8.5 1.5 Q15.6 1.5 15.6 8 Q15.6 11.8 8.5 20.4 Z" fill="#c6c6c6" stroke="#6f6f6f" stroke-width="1"/><circle cx="8.5" cy="8.6" r="2.2" fill="#fff" stroke="#6f6f6f" stroke-width="1"/></svg>
<svg style="left:895px;top:170px;" width="30" height="332" viewBox="0 0 30 332"><path d="M0.5 0.5 H22.5 L28.5 6.5 V30.5 H0.5" fill="#ececec" stroke="#c2c2c2" stroke-width="1"/><path d="M0.5 30.5 H22.5 L28.5 36.5 V60.5 H0.5" fill="#ececec" stroke="#c2c2c2" stroke-width="1"/><path d="M0.5 60.5 H22.5 L28.5 66.5 V90.5 H0.5" fill="#ececec" stroke="#c2c2c2" stroke-width="1"/><path d="M0.5 90.5 H22.5 L28.5 96.5 V120.5 H0.5" fill="#ececec" stroke="#c2c2c2" stroke-width="1"/><path d="M0.5 120.5 H22.5 L28.5 126.5 V150.5 H0.5" fill="#ececec" stroke="#c2c2c2" stroke-width="1"/><path d="M0.5 150.5 H22.5 L28.5 156.5 V180.5 H0.5" fill="#ececec" stroke="#c2c2c2" stroke-width="1"/><path d="M0.5 180.5 H22.5 L28.5 186.5 V210.5 H0.5" fill="#ececec" stroke="#c2c2c2" stroke-width="1"/><path d="M0.5 210.5 H22.5 L28.5 216.5 V240.5 H0.5" fill="#ececec" stroke="#c2c2c2" stroke-width="1"/><path d="M0.5 240.5 H22.5 L28.5 246.5 V270.5 H0.5" fill="#ececec" stroke="#c2c2c2" stroke-width="1"/><path d="M0.5 270.5 H22.5 L28.5 276.5 V300.5 H0.5" fill="#ececec" stroke="#c2c2c2" stroke-width="1"/><path d="M0.5 300.5 H22.5 L28.5 306.5 V330.5 H0.5" fill="#ececec" stroke="#c2c2c2" stroke-width="1"/></svg>
<svg style="left:901px;top:177px;" width="16" height="16" viewBox="0 0 16 16"><rect x="1.4" y="1.6" width="8.2" height="8.2" rx="1.8" fill="#c9353a"/><path d="M4.4 4.4 L5.8 3.4 V8" fill="none" stroke="#fff" stroke-width="1.3"/><circle cx="11" cy="11" r="4.6" fill="#7fb55c" stroke="#f2f2f2" stroke-width="0.7"/><path d="M8.8 10.8 L10.6 12.8 L13.2 9.4" fill="none" stroke="#fff" stroke-width="1.6"/></svg>
<svg style="left:901px;top:207px;" width="16" height="16" viewBox="0 0 16 16"><rect x="1.4" y="3" width="12.4" height="10.6" rx="1.2" fill="#fdfdfd" stroke="#8a8a8a" stroke-width="1"/><rect x="1.4" y="3" width="12.4" height="2.6" fill="#e7a349"/><path d="M4.4 1.2 V3.4 M10.8 1.2 V3.4" stroke="#8a8a8a" stroke-width="1.2"/><path d="M4.6 8.8 L6.2 10.4 L9 7.4" fill="none" stroke="#58a846" stroke-width="1.4"/><path d="M10.0 12.6 H15.2 M12.6 10.0 V15.2" stroke="#58a846" stroke-width="1.3"/></svg>
<svg style="left:901px;top:237px;" width="16" height="16" viewBox="0 0 16 16"><circle cx="8" cy="4" r="2.6" fill="#dcdcdc" stroke="#8a8a8a" stroke-width="1"/><path d="M1.6 14.4 Q1.6 7.6 8 7.6 Q14.4 7.6 14.4 14.4 Z" fill="#f4f4f4" stroke="#8a8a8a" stroke-width="1"/></svg>
<svg style="left:901px;top:267px;" width="16" height="16" viewBox="0 0 16 16"><rect x="1.2" y="6" width="6.6" height="3.6" rx="1.8" fill="#fff" stroke="#7a7a7a" stroke-width="1"/><path d="M7.8 7.8 H11 M8 7.8 Q9 3.2 11 3.2 M8 7.8 Q8 12.2 10 12.2" fill="none" stroke="#7a7a7a" stroke-width="1"/><rect x="11" y="2" width="3.8" height="2.4" rx="1.2" fill="#fff" stroke="#7a7a7a" stroke-width="0.9"/><rect x="11" y="6.6" width="3.8" height="2.4" rx="1.2" fill="#fff" stroke="#7a7a7a" stroke-width="0.9"/><path d="M10.4 13 H15.6 M13 10.4 V15.6" stroke="#58a846" stroke-width="1.3"/></svg>
<svg style="left:901px;top:297px;" width="16" height="16" viewBox="0 0 16 16"><path d="M13 3.4 H14 Q15 3.4 15 4.4 V13 M3.6 14.8 H12" fill="none" stroke="#7a7a7a" stroke-width="1"/><rect x="1.2" y="1.4" width="10.8" height="11.6" rx="1" fill="#5a9ad8" stroke="#7aa9d6" stroke-width="0.8"/><path d="M2.4 12.4 L6 6.6 L9.6 12.4 Z" fill="#c9c9c9" stroke="#8a8a8a" stroke-width="0.7"/><path d="M12.8 5 V11.6" stroke="#7a7a7a" stroke-width="1"/><path d="M10.8 13.4 H16.0 M13.4 10.8 V16.0" stroke="#58a846" stroke-width="1.3"/></svg>
<svg style="left:901px;top:327px;" width="16" height="16" viewBox="0 0 16 16"><circle cx="6.6" cy="6.4" r="5" fill="#fbfbfb" stroke="#8a8a8a" stroke-width="1.2"/><path d="M10.4 10.2 L14.6 14.4" stroke="#8a8a8a" stroke-width="2.2" stroke-linecap="round"/></svg>
<svg style="left:901px;top:357px;" width="16" height="16" viewBox="0 0 16 16"><rect x="0.8" y="0.8" width="14.4" height="14.4" rx="1.4" fill="#3f9bd6" stroke="#9fd0ee" stroke-width="1"/><path d="M3 6 V3 H6 M10 3 H13 V6 M13 10 V13 H10 M6 13 H3 V10" fill="none" stroke="#e6f4fc" stroke-width="1.4"/><path d="M5.8 5.6 V10.4 M10.2 5.6 V10.4 M5.8 8 H10.2" stroke="#fff" stroke-width="1.8"/></svg>
<svg style="left:901px;top:387px;" width="16" height="16" viewBox="0 0 16 16"><rect x="1.2" y="1.6" width="9.4" height="7.6" rx="1.2" fill="#fdfdfd" stroke="#7a7a7a" stroke-width="1"/><path d="M3.4 4 H8" stroke="#b0b0b0" stroke-width="1.2"/><rect x="4" y="6.4" width="11" height="8.2" rx="1.4" fill="#fdfdfd" stroke="#3f7fc4" stroke-width="1.2"/><rect x="6.6" y="9.6" width="5.6" height="2" fill="#3f7fc4"/></svg>
<svg style="left:901px;top:417px;" width="16" height="16" viewBox="0 0 16 16"><rect x="7" y="4" width="8.4" height="7.6" fill="#cfe3f6" stroke="#4a90d6" stroke-width="0.9"/><path d="M7.4 4.4 L11.2 8 L15 4.4" fill="none" stroke="#4a90d6" stroke-width="0.9"/><path d="M0.8 2.4 L9 0.8 V15.2 L0.8 13.6 Z" fill="#1565c0"/><ellipse cx="5" cy="8" rx="2" ry="2.6" fill="none" stroke="#fff" stroke-width="1.3"/></svg>
<svg style="left:901px;top:447px;" width="16" height="16" viewBox="0 0 16 16"><circle cx="8" cy="8" r="6.8" fill="#dadada" stroke="#808080" stroke-width="1"/><path d="M1.2 8 H14.8 M2.4 4.4 H13.6 M2.4 11.6 H13.6 M8 1.2 V14.8" stroke="#808080" stroke-width="0.9" fill="none"/><ellipse cx="8" cy="8" rx="3.4" ry="6.8" fill="none" stroke="#808080" stroke-width="0.9"/></svg>
<svg style="left:901px;top:477px;" width="16" height="16" viewBox="0 0 16 16"><path d="M9 2.6 H15.4 V13.4 H9" fill="#f4f4f4" stroke="#4f8a2c" stroke-width="0.8" stroke-dasharray="1.6 1"/><path d="M10.4 4.6 H14.4 M10.4 6.8 H14.4 M10.4 9 H14.4 M10.4 11.2 H14.4" stroke="#5d9a34" stroke-width="1.2" stroke-dasharray="1.4 0.9"/><path d="M0.8 2.4 L9.2 0.8 V15.2 L0.8 13.6 Z" fill="#5d9a34"/><path d="M3.2 5.2 L6.8 10.8 M6.8 5.2 L3.2 10.8" stroke="#fff" stroke-width="1.4"/></svg>
<svg style="left:0px;top:750px;" width="927" height="20" viewBox="0 0 927 20"><path d="M337 0 L356 20 H524.5 V0 Z" fill="#fdfdfd"/>
<path d="M16.5 1 L35 20 M337.5 1 L356 20" stroke="#8a8a8a" stroke-width="1" fill="none"/>
<path d="M161.5 1 V20 M290.5 1 V20 M524.5 1 V20" stroke="#b4b4b4" stroke-width="1"/>
<path d="M161.5 16 L165 20 M290.5 16 L294 20" stroke="#9a9a9a" stroke-width="1"/>
<path d="M8.4 9 V16.6 L4.4 12.8 Z" fill="none" stroke="#7a7a7a" stroke-width="1"/>
<path d="M878.6 9 V16.6 L882.8 12.8 Z" fill="none" stroke="#7a7a7a" stroke-width="1"/></svg>
<svg style="left:45px;top:752px;" width="14" height="16" viewBox="0 0 14 16"><path d="M0.6 0.8 H9.6 L13.4 4.6 V15.4 H0.6 Z" fill="#3a57b4"/><path d="M9.6 0.8 V4.6 H13.4 Z" fill="#e9edf8"/><rect x="2.4" y="5.2" width="9.2" height="8.4" fill="#f3f3f3"/><path d="M6 13.6 L7.4 6.2 L9 5.2 L10.4 13.6 Z" fill="#b9b9b9"/><path d="M7 5.2 L9.4 5.2 L8 9.8 Z" fill="#3a57b4"/></svg>
<svg style="left:174px;top:752px;" width="14" height="16" viewBox="0 0 14 16"><path d="M0.6 0.8 H9.6 L13.4 4.6 V15.4 H0.6 Z" fill="#3a57b4"/><path d="M9.6 0.8 V4.6 H13.4 Z" fill="#e9edf8"/><rect x="2.4" y="5.2" width="9.2" height="8.4" fill="#f3f3f3"/><path d="M6 13.6 L7.4 6.2 L9 5.2 L10.4 13.6 Z" fill="#b9b9b9"/><path d="M7 5.2 L9.4 5.2 L8 9.8 Z" fill="#3a57b4"/></svg>
<svg style="left:303px;top:752px;" width="14" height="16" viewBox="0 0 14 16"><path d="M0.6 0.8 H9.6 L13.4 4.6 V15.4 H0.6 Z" fill="#3a57b4"/><path d="M9.6 0.8 V4.6 H13.4 Z" fill="#e9edf8"/><rect x="2.4" y="5.2" width="9.2" height="8.4" fill="#f3f3f3"/><path d="M6 13.6 L7.4 6.2 L9 5.2 L10.4 13.6 Z" fill="#b9b9b9"/><path d="M7 5.2 L9.4 5.2 L8 9.8 Z" fill="#3a57b4"/></svg>
<svg style="left:366px;top:752px;" width="14" height="16" viewBox="0 0 14 16"><path d="M0.6 0.8 H9.6 L13.4 4.6 V15.4 H0.6 Z" fill="#3a57b4"/><path d="M9.6 0.8 V4.6 H13.4 Z" fill="#e9edf8"/><rect x="2.4" y="5.2" width="9.2" height="8.4" fill="#f3f3f3"/><path d="M6 13.6 L7.4 6.2 L9 5.2 L10.4 13.6 Z" fill="#b9b9b9"/><path d="M7 5.2 L9.4 5.2 L8 9.8 Z" fill="#3a57b4"/></svg>
<span style="left:68.80px;top:754.00px;font-size:11.3px;line-height:15px;color:#333;transform:scaleX(0.9997);">Selling Bananas*</span>
<span style="left:197.60px;top:754.00px;font-size:11.3px;line-height:15px;color:#333;transform:scaleX(1.0009);">Selling Bananas*</span>
<span style="left:327.30px;top:754.00px;font-size:11.3px;line-height:15px;color:#333;transform:scaleX(0.8436);">Test</span>
<span style="left:391.00px;top:754.00px;font-size:11.3px;line-height:15px;color:#222;font-weight:bold;transform:scaleX(0.9490);">Selling Bananas*</span>
<svg style="left:490px;top:757px;" width="9" height="8" viewBox="0 0 9 8"><path d="M1 5 V1 H5" fill="none" stroke="#666" stroke-width="1"/><path d="M3 3 L7.4 6.6 M7.6 3.4 V6.8 H4" fill="none" stroke="#666" stroke-width="1"/></svg>
<svg style="left:509px;top:756px;" width="10" height="10" viewBox="0 0 10 10"><path d="M1 1.4 L8.6 8.6 M8.6 1.4 L1 8.6" stroke="#777" stroke-width="1"/></svg>
<svg style="left:939px;top:3px;" width="19" height="19" viewBox="0 0 19 19"><path d="M13.4 1.2 L17.6 3.2 V15.8 L13.4 17.8 L5.2 10.6 L2.6 12.8 L1.2 12 V7 L2.6 6.2 L5.2 8.4 Z M13.4 5.6 L8.6 9.5 L13.4 13.4 Z" fill="#2a9df4" fill-rule="evenodd"/><path d="M13.4 1.2 L17.6 3.2 V15.8 L13.4 17.8 Z" fill="#1f7fd6"/></svg>
<span style="left:973.50px;top:4.00px;font-size:13px;line-height:17px;color:#cccccc;transform:scaleX(0.9000);">File</span>
<span style="left:1008.80px;top:4.00px;font-size:13px;line-height:17px;color:#cccccc;transform:scaleX(0.9341);">Edit</span>
<span style="left:1046.70px;top:4.00px;font-size:13px;line-height:17px;color:#cccccc;transform:scaleX(0.9626);">Selection</span>
<svg style="left:1119px;top:10px;" width="14" height="4" viewBox="0 0 14 4"><circle cx="2" cy="2" r="1.1" fill="#ccc"/><circle cx="6.5" cy="2" r="1.1" fill="#ccc"/><circle cx="11" cy="2" r="1.1" fill="#ccc"/></svg>
<svg style="left:1175px;top:6px;" width="14" height="12" viewBox="0 0 14 12"><path d="M13 6 H1.6 M6.4 1.2 L1.6 6 L6.4 10.8" fill="none" stroke="#cfcfcf" stroke-width="1.3"/></svg>
<svg style="left:1201px;top:6px;" width="14" height="12" viewBox="0 0 14 12"><path d="M1 6 H12.4 M7.6 1.2 L12.4 6 L7.6 10.8" fill="none" stroke="#6a6a6a" stroke-width="1.3"/></svg>
<div style="left:1229px;top:1px;width:290px;height:23px;background:#222222;border:1px solid #3e3e3e;border-radius:6px;box-sizing:border-box;"></div>
<svg style="left:1331px;top:6px;" width="13" height="12" viewBox="0 0 13 12"><circle cx="5.2" cy="5" r="4" fill="none" stroke="#cfcfcf" stroke-width="1.2"/><path d="M8 8 L11.6 11.4" stroke="#cfcfcf" stroke-width="1.3"/></svg>
<span style="left:1350.20px;top:4.00px;font-size:13px;line-height:17px;color:#cccccc;transform:scaleX(0.9487);">mindm-mcp [Administrator]</span>
<span style="left:998.40px;top:41.00px;font-size:11px;line-height:14px;color:#cfcfcf;transform:scaleX(0.8767);">CODEX</span>
<svg style="left:1415px;top:74px;" width="15" height="15" viewBox="0 0 15 15"><path d="M2.4 4.4 A5.6 5.6 0 1 1 1.9 8.6" fill="none" stroke="#c8c8c8" stroke-width="1.2"/><path d="M1.2 1.6 V4.8 H4.4" fill="none" stroke="#c8c8c8" stroke-width="1.2"/><path d="M7.4 4.4 V7.8 L9.8 9.2" fill="none" stroke="#c8c8c8" stroke-width="1.2"/></svg>
<svg style="left:1442px;top:74px;" width="16" height="15" viewBox="0 0 16 15"><g transform="translate(0.4 0.6)"><path d="M6.3 1 H8.7 L9.1 2.9 L10.3 3.5 L12.1 2.7 L13.5 4.7 L12.3 6.1 V7.1 L13.7 8.5 L12.5 10.7 L10.5 10.1 L9.5 10.7 L9 12.8 H6.4 L5.7 10.8 L4.7 10.2 L2.7 10.9 L1.4 8.8 L2.8 7.3 V6.2 L1.4 4.8 L2.6 2.7 L4.6 3.4 L5.7 2.8 Z" fill="none" stroke="#c8c8c8" stroke-width="1.2" stroke-linejoin="round"/><circle cx="7.5" cy="6.9" r="2" fill="none" stroke="#c8c8c8" stroke-width="1.2"/></g></svg>
<svg style="left:1470px;top:74px;" width="15" height="15" viewBox="0 0 15 15"><path d="M6.6 2.6 H3.4 Q1.6 2.6 1.6 4.4 V11.2 Q1.6 13 3.4 13 H10.2 Q12 13 12 11.2 V8" fill="none" stroke="#c8c8c8" stroke-width="1.2"/><path d="M5.6 9.2 L6.2 6.8 L11.4 1.6 Q12.2 1 13 1.8 Q13.6 2.6 13 3.2 L7.8 8.4 Z" fill="none" stroke="#c8c8c8" stroke-width="1.1"/></svg>
<svg style="left:943px;top:42px;" width="22" height="24" viewBox="0 0 22 24"><path d="M7.4 5.4 V3.4 Q7.4 2 8.8 2 H14.4 L19.2 6.8 V17.4 Q19.2 18.8 17.8 18.8 H16" fill="none" stroke="#868686" stroke-width="1.5"/><path d="M14.2 2.2 V7 H19" fill="none" stroke="#868686" stroke-width="1.5"/><path d="M2.4 8 Q2.4 5.6 4.8 5.6 H7.4 V16.6 Q7.4 18.8 9.6 18.8 H15.8 V20 Q15.8 22 13.8 22 H4.8 Q2.4 22 2.4 19.6 Z" fill="none" stroke="#868686" stroke-width="1.5"/></svg>
<svg style="left:942px;top:90px;" width="24" height="24" viewBox="0 0 24 24"><circle cx="9.8" cy="9.8" r="7.6" fill="none" stroke="#868686" stroke-width="1.5"/><path d="M15.2 15.4 L22 21.6" fill="none" stroke="#868686" stroke-width="1.5"/></svg>
<svg style="left:943px;top:137px;" width="28" height="30" viewBox="0 0 28 30"><circle cx="5.6" cy="4.6" r="2.8" fill="none" stroke="#868686" stroke-width="1.5"/><circle cx="16.6" cy="8.8" r="2.8" fill="none" stroke="#868686" stroke-width="1.5"/><circle cx="5.6" cy="21" r="2.8" fill="none" stroke="#868686" stroke-width="1.5"/><path d="M5.6 7.4 V18.2 M16.6 11.6 Q16.6 15 12.8 15 H8 Q5.6 15 5.6 17" fill="none" stroke="#868686" stroke-width="1.5"/><circle cx="18.6" cy="21.2" r="7.6" fill="#0a7bd6"/></svg>
<span style="left:959.60px;top:153.00px;font-size:9.5px;line-height:12px;color:#ffffff;font-weight:bold;transform:scaleX(0.6476);">1</span>
<svg style="left:940px;top:187px;" width="26" height="26" viewBox="0 0 26 26"><path d="M8.6 8 V3 L22.6 11.4 L14.6 16.2" fill="none" stroke="#868686" stroke-width="1.5"/><ellipse cx="8" cy="16.6" rx="3.6" ry="4.6" fill="none" stroke="#868686" stroke-width="1.5"/><path d="M5.4 13.2 Q8 11 10.6 13.2 M1.6 12.6 L4.6 14.6 M14.4 12.6 L11.4 14.6 M1 17.4 H4.4 M11.6 17.4 H15 M2 22.6 L5 20 M14 22.6 L11 20" fill="none" stroke="#868686" stroke-width="1.5" stroke-width="1.2"/></svg>
<svg style="left:943px;top:233px;" width="24" height="24" viewBox="0 0 24 24"><path d="M2.6 6.6 H11 V21 H4 Q2.6 21 2.6 19.6 Z M2.6 13.8 H18.4 V19.6 Q18.4 21 17 21 H11" fill="none" stroke="#868686" stroke-width="1.5"/><path d="M16.6 2.4 L21.2 7 L16.6 11.6 L12 7 Z" fill="none" stroke="#868686" stroke-width="1.5"/></svg>
<svg style="left:940px;top:280px;" width="28" height="26" viewBox="0 0 28 26"><path d="M13 4 H5.4 Q2.6 4 2.6 6.8 V15.6 Q2.6 18.4 5.4 18.4 H7.4 V23 L12.6 18.4 H19.6 Q22.4 18.4 22.4 15.6 V13.6" fill="none" stroke="#868686" stroke-width="1.5"/><path d="M20.4 1.4 Q20.6 5.2 24.4 5.6 Q20.6 6 20.4 9.8 Q20.2 6 16.4 5.6 Q20.2 5.2 20.4 1.4 Z M24.6 8.6 Q24.7 10.5 26.6 10.8 Q24.7 11.1 24.6 13 Q24.5 11.1 22.6 10.8 Q24.5 10.5 24.6 8.6 Z" fill="#868686"/></svg>
<svg style="left:941.4px;top:329.2px" width="24.8" height="24.8" viewBox="0 0 24 24"><path fill="#ececec" d="M22.2819 9.8211a5.9847 5.9847 0 0 0-.5157-4.9108 6.0462 6.0462 0 0 0-6.5098-2.9A6.0651 6.0651 0 0 0 4.9807 4.1818a5.9847 5.9847 0 0 0-3.9977 2.9 6.0462 6.0462 0 0 0 .7427 7.0966 5.98 5.98 0 0 0 .511 4.9107 6.051 6.051 0 0 0 6.5146 2.9001A5.9847 5.9847 0 0 0 13.2599 24a6.0557 6.0557 0 0 0 5.7718-4.2058 5.9894 5.9894 0 0 0 3.9977-2.9001 6.0557 6.0557 0 0 0-.7475-7.0729zm-9.022 12.6081a4.4755 4.4755 0 0 1-2.8764-1.0408l.1419-.0804 4.7783-2.7582a.7948.7948 0 0 0 .3927-.6813v-6.7369l2.02 1.1686a.071.071 0 0 1 .038.052v5.5826a4.504 4.504 0 0 1-4.4945 4.4944zm-9.6607-4.1254a4.4708 4.4708 0 0 1-.5346-3.0137l.142.0852 4.783 2.7582a.7712.7712 0 0 0 .7806 0l5.8428-3.3685v2.3324a.0804.0804 0 0 1-.0332.0615L9.74 19.9502a4.4992 4.4992 0 0 1-6.1408-1.6464zM2.3408 7.8956a4.485 4.485 0 0 1 2.3655-1.9728V11.6a.7664.7664 0 0 0 .3879.6765l5.8144 3.3543-2.0201 1.1685a.0757.0757 0 0 1-.071 0l-4.8303-2.7865A4.504 4.504 0 0 1 2.3408 7.872zm16.5963 3.8558L13.1038 8.364 15.1192 7.2a.0757.0757 0 0 1 .071 0l4.8303 2.7913a4.4944 4.4944 0 0 1-.6765 8.1042v-5.6772a.79.79 0 0 0-.407-.667zm2.0107-3.0231l-.142-.0852-4.7735-2.7818a.7759.7759 0 0 0-.7854 0L9.409 9.2297V6.8974a.0662.0662 0 0 1 .0284-.0615l4.8303-2.7866a4.4992 4.4992 0 0 1 6.6802 4.66zM8.3065 12.863l-2.02-1.1638a.0804.0804 0 0 1-.038-.0567V6.0742a4.4992 4.4992 0 0 1 7.3757-3.4537l-.142.0805L8.704 5.459a.7948.7948 0 0 0-.3927.6813zm1.0976-2.3654l2.602-1.4998 2.6069 1.4998v2.9994l-2.5974 1.4997-2.6067-1.4997Z"/></svg>
<div style="left:931px;top:318px;width:1.6px;height:48px;background:#c4c4c4;"></div>
<svg style="left:940px;top:378px;" width="28" height="26" viewBox="0 0 28 26"><path d="M19.6 10 V4.4 Q19.6 2.4 17.6 2.4 H4.6 Q2.6 2.4 2.6 4.4 V14.4 Q2.6 16.4 4.6 16.4 H11.4 M7 20.6 H11.8 M9.4 16.6 V20.4" fill="none" stroke="#868686" stroke-width="1.5"/><circle cx="18.6" cy="17.8" r="6.2" fill="#8c8c8c"/><path d="M16.2 15.4 L18 17.8 L16.2 20.2 M21 15.4 L19.2 17.8 L21 20.2" fill="none" stroke="#181818" stroke-width="1.2"/></svg>
<svg style="left:943px;top:424px;" width="26" height="28" viewBox="0 0 26 28"><path d="M11 24 H4.6 Q2.6 24 2.6 22 V4.4 Q2.6 2.4 4.6 2.4 H12 L18.2 8.6 V13" fill="none" stroke="#868686" stroke-width="1.5"/><path d="M11.8 2.6 V8.8 H18" fill="none" stroke="#868686" stroke-width="1.5"/><path d="M9.6 11.2 Q6.4 11 6.4 14 Q6.4 17 9.6 16.8 M11.4 14 H14.2 M12.8 12.6 V15.4" fill="none" stroke="#868686" stroke-width="1.5" stroke-width="1.2"/><circle cx="18.4" cy="20.4" r="3.6" fill="none" stroke="#868686" stroke-width="2.6" stroke-dasharray="1.9 0.95"/><circle cx="18.4" cy="20.4" r="2.4" fill="none" stroke="#868686" stroke-width="1.4"/></svg>
<svg style="left:942px;top:689px;" width="24" height="24" viewBox="0 0 24 24"><circle cx="11.6" cy="11.8" r="10" fill="none" stroke="#868686" stroke-width="1.5"/><circle cx="11.6" cy="8.4" r="3.4" fill="#868686"/><path d="M4.8 18 Q5.4 13.2 11.6 13.2 Q17.8 13.2 18.4 18 Q15.6 21 11.6 21 Q7.6 21 4.8 18 Z" fill="#868686"/></svg>
<svg style="left:942px;top:736px;" width="24" height="24" viewBox="0 0 24 24"><g transform="translate(0.4 0.6)"><path d="M9.6 1.6 H13.4 L14 4.6 L15.9 5.6 L18.8 4.4 L21 7.6 L19.1 9.8 V11.4 L21.3 13.6 L19.4 17.1 L16.2 16.1 L14.6 17.1 L13.8 20.4 H9.7 L8.6 17.2 L7 16.3 L3.8 17.4 L1.8 14.1 L4 11.7 V10 L1.8 7.7 L3.7 4.4 L6.9 5.5 L8.6 4.6 Z" fill="none" stroke="#868686" stroke-width="1.5" stroke-linejoin="round"/><circle cx="11.5" cy="11" r="3.2" fill="none" stroke="#868686" stroke-width="1.5"/></g></svg>
<svg style="left:1223.6px;top:343.4px" width="38.8" height="38.8" viewBox="0 0 24 24"><path fill="#454545" d="M22.2819 9.8211a5.9847 5.9847 0 0 0-.5157-4.9108 6.0462 6.0462 0 0 0-6.5098-2.9A6.0651 6.0651 0 0 0 4.9807 4.1818a5.9847 5.9847 0 0 0-3.9977 2.9 6.0462 6.0462 0 0 0 .7427 7.0966 5.98 5.98 0 0 0 .511 4.9107 6.051 6.051 0 0 0 6.5146 2.9001A5.9847 5.9847 0 0 0 13.2599 24a6.0557 6.0557 0 0 0 5.7718-4.2058 5.9894 5.9894 0 0 0 3.9977-2.9001 6.0557 6.0557 0 0 0-.7475-7.0729zm-9.022 12.6081a4.4755 4.4755 0 0 1-2.8764-1.0408l.1419-.0804 4.7783-2.7582a.7948.7948 0 0 0 .3927-.6813v-6.7369l2.02 1.1686a.071.071 0 0 1 .038.052v5.5826a4.504 4.504 0 0 1-4.4945 4.4944zm-9.6607-4.1254a4.4708 4.4708 0 0 1-.5346-3.0137l.142.0852 4.783 2.7582a.7712.7712 0 0 0 .7806 0l5.8428-3.3685v2.3324a.0804.0804 0 0 1-.0332.0615L9.74 19.9502a4.4992 4.4992 0 0 1-6.1408-1.6464zM2.3408 7.8956a4.485 4.485 0 0 1 2.3655-1.9728V11.6a.7664.7664 0 0 0 .3879.6765l5.8144 3.3543-2.0201 1.1685a.0757.0757 0 0 1-.071 0l-4.8303-2.7865A4.504 4.504 0 0 1 2.3408 7.872zm16.5963 3.8558L13.1038 8.364 15.1192 7.2a.0757.0757 0 0 1 .071 0l4.8303 2.7913a4.4944 4.4944 0 0 1-.6765 8.1042v-5.6772a.79.79 0 0 0-.407-.667zm2.0107-3.0231l-.142-.0852-4.7735-2.7818a.7759.7759 0 0 0-.7854 0L9.409 9.2297V6.8974a.0662.0662 0 0 1 .0284-.0615l4.8303-2.7866a4.4992 4.4992 0 0 1 6.6802 4.66zM8.3065 12.863l-2.02-1.1638a.0804.0804 0 0 1-.038-.0567V6.0742a4.4992 4.4992 0 0 1 7.3757-3.4537l-.142.0805L8.704 5.459a.7948.7948 0 0 0-.3927.6813zm1.0976-2.3654l2.602-1.4998 2.6069 1.4998v2.9994l-2.5974 1.4997-2.6067-1.4997Z"/></svg>
<div style="left:992px;top:597.5px;width:502px;height:139.5px;background:#2b2b2b;border:1px solid #373737;border-radius:15px;box-sizing:border-box;"></div>
<span style="left:1005.40px;top:617.00px;font-size:13px;line-height:17px;color:#dcdcdc;transform:scaleX(1.0043);">get the current MindManager mindmap in mermaid format, add 5 examples as</span>
<span style="left:1005.40px;top:636.00px;font-size:13px;line-height:17px;color:#dcdcdc;transform:scaleX(1.0066);">subtopics to the marketing topic with a detailed description as a note to each and</span>
<span style="left:1005.40px;top:656.00px;font-size:13px;line-height:17px;color:#dcdcdc;transform:scaleX(0.9996);">create a new mindmap from it. Use mode=full and turbo=false. Keep or use the</span>
<span style="left:1005.40px;top:675.00px;font-size:13px;line-height:17px;color:#dcdcdc;transform:scaleX(0.9873);">full mermaid structure e.g.  [xyz] %% {"id": n, "notes": {"text": "..."}}</span>
<div style="left:1002.4px;top:701px;width:26px;height:26px;background:#343434;border-radius:13px;"></div>
<svg style="left:1007px;top:706px;" width="17" height="17" viewBox="0 0 17 17"><path d="M8.4 1.6 V15.2 M1.6 8.4 H15.2" stroke="#e4e4e4" stroke-width="1.3"/></svg>
<div style="left:1034px;top:700px;width:104.2px;height:28px;background:#22384c;border-radius:14px;"></div>
<svg style="left:1043.6px;top:707px;" width="13" height="14" viewBox="0 0 13 14"><path d="M6 1.6 A4.6 4.6 0 1 0 4.4 10.4" fill="none" stroke="#5fadf0" stroke-width="1.2"/><path d="M6 1.6 A4.6 4.6 0 0 1 10.4 5" fill="none" stroke="#5fadf0" stroke-width="1.2"/><path d="M6.2 5.6 L7.2 12.6 L8.8 10.8 L10.8 13 L11.8 12 L10 9.8 L12 8.8 Z" fill="#22384c" stroke="#5fadf0" stroke-width="1"/></svg>
<span style="left:1061.50px;top:705.00px;font-size:13px;line-height:17px;color:#5fadf0;transform:scaleX(0.9384);">Auto context</span>
<div style="left:1456.8px;top:700px;width:28px;height:28px;background:#d2d2d2;border-radius:14px;"></div>
<svg style="left:1463px;top:706px;" width="16" height="16" viewBox="0 0 16 16"><path d="M7.8 14 V2.4 M2.8 7.2 L7.8 2.2 L12.8 7.2" fill="none" stroke="#2b2b2b" stroke-width="1.3"/></svg>
<svg style="left:1200px;top:702px;" width="16" height="24" viewBox="0 0 16 24"><path d="M1.6 1.6 V19.6 L5.8 15.6 L8.8 22.2 L11.6 21 L8.6 14.6 H14.2 Z" fill="#fff" stroke="#111" stroke-width="1.1" stroke-linejoin="round"/></svg>
<svg style="left:1000px;top:750px;" width="13" height="11" viewBox="0 0 13 11"><rect x="1.6" y="1" width="9.4" height="6.6" rx="1" fill="none" stroke="#a8a8a8" stroke-width="1.1"/><path d="M0.6 9.2 H12" stroke="#a8a8a8" stroke-width="1.3"/></svg>
<span style="left:1017.30px;top:747.00px;font-size:13px;line-height:17px;color:#b4b4b4;transform:scaleX(0.8546);">Local</span>
<svg style="left:1049.7px;top:752.6px;" width="10" height="6" viewBox="0 0 10 6"><path d="M1 1 L5.0 5 L9 1" fill="none" stroke="#8e8e8e" stroke-width="1.1"/></svg>
<svg style="left:1081px;top:750px;" width="13" height="10" viewBox="0 0 13 10"><path d="M1 1 L6.4 5 L1 9 Z M6.6 1 L12 5 L6.6 9 Z" fill="#a8a8a8"/></svg>
<span style="left:1098.90px;top:747.00px;font-size:13px;line-height:17px;color:#b4b4b4;transform:scaleX(0.8869);">Agent (full access)</span>
<svg style="left:1199.8px;top:752.6px;" width="10" height="6" viewBox="0 0 10 6"><path d="M1 1 L5.0 5 L9 1" fill="none" stroke="#8e8e8e" stroke-width="1.1"/></svg>
<svg style="left:1231px;top:749px;" width="13" height="13" viewBox="0 0 13 13"><path d="M6.4 1 L11.6 3.6 V9.4 L6.4 12 L1.2 9.4 V3.6 Z M1.4 3.8 L6.4 6.4 L11.4 3.8 M6.4 6.4 V11.8" fill="none" stroke="#a8a8a8" stroke-width="1"/></svg>
<svg style="left:1250.0px;top:752.6px;" width="10" height="6" viewBox="0 0 10 6"><path d="M1 1 L5.0 5 L9 1" fill="none" stroke="#8e8e8e" stroke-width="1.1"/></svg>
<svg style="left:1281px;top:749px;" width="13" height="13" viewBox="0 0 13 13"><path d="M6 1.4 Q3.6 0.8 3 3 Q1 3.6 1.6 5.8 Q0.6 7.4 1.8 8.8 Q1.6 11 3.8 11.2 Q4.8 12.2 6 11.4 Z M6.8 1.4 Q9.2 0.8 9.8 3 Q11.8 3.6 11.2 5.8 Q12.2 7.4 11 8.8 Q11.2 11 9 11.2 Q8 12.2 6.8 11.4 Z" fill="none" stroke="#a8a8a8" stroke-width="1"/><path d="M3.6 6.4 H5.6 M7.2 6.4 H9.2" stroke="#a8a8a8" stroke-width="0.9"/></svg>
<svg style="left:1300.3px;top:752.6px;" width="10" height="6" viewBox="0 0 10 6"><path d="M1 1 L5.0 5 L9 1" fill="none" stroke="#8e8e8e" stroke-width="1.1"/></svg>
</body></html>
